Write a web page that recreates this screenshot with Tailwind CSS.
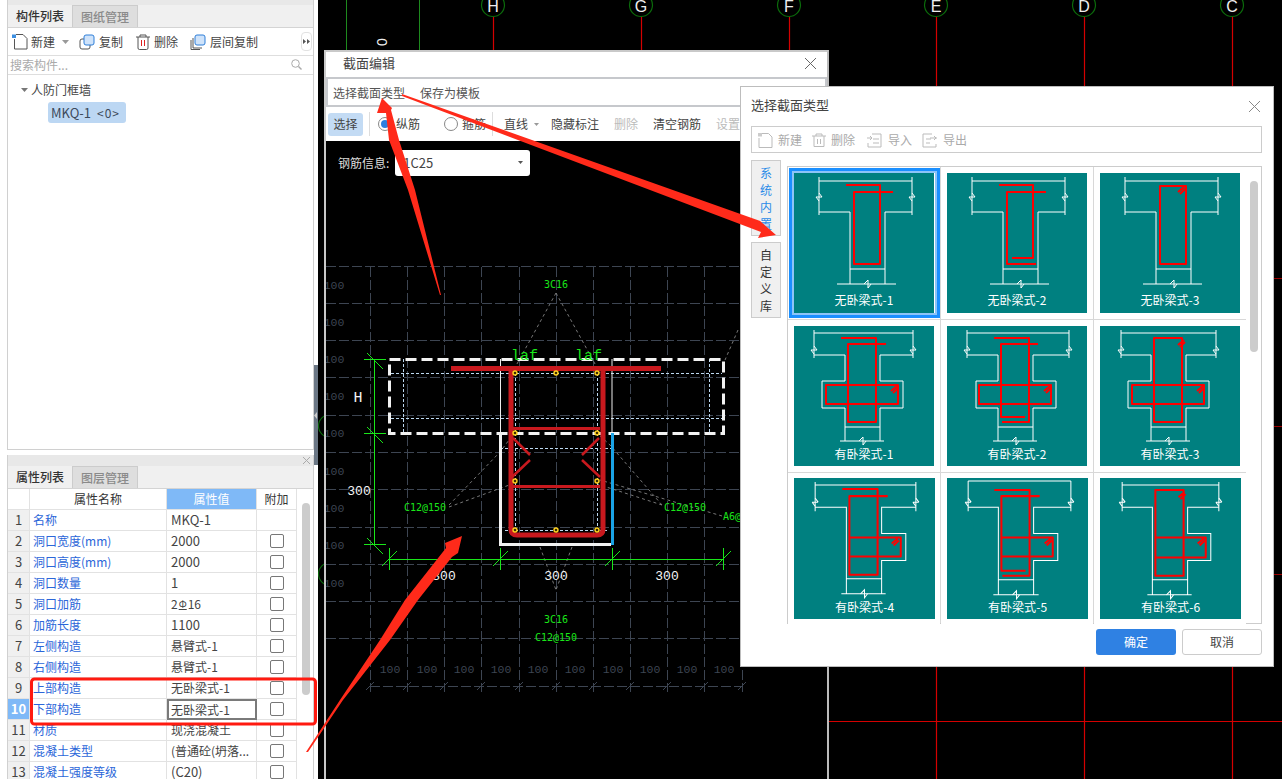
<!DOCTYPE html>
<html lang="zh">
<head>
    <meta charset="UTF-8">
    <title>截面编辑</title>
    <script src="https://cdn.jsdelivr.net/npm/@tailwindcss/browser@4"></script>
</head>
<body class="bg-white">
<div class="relative flex w-[1282px] h-[779px] overflow-hidden font-['Noto_Sans_CJK_SC','Noto_Sans',sans-serif] text-[12px] text-[#444]">

    <!-- left column -->
    <aside class="relative w-[318px] h-full shrink-0 bg-white pl-[7px] pr-[4px] flex flex-col">
        <section class="h-[450px] border-x border-b border-[#d0d0d0] flex flex-col shrink-0">
            <div class="h-[5px] bg-[#e8e8e8]"></div>
            <div class="h-[23px] bg-[#f0f0f0] border-b border-[#d4d4d4] flex">
                <div class="w-[65px] flex items-center justify-center font-medium text-[#333] border-r border-[#ccc]">构件列表</div>
                <div class="w-[65px] flex items-center justify-center font-medium text-[#8a8a8a] bg-[#dedede] border-r border-t border-[#ccc]">图纸管理</div>
            </div>
            <div class="h-[28px] relative flex items-center border-b border-[#dedede] pl-[4px]">
                <svg class="w-4 h-4 mr-[3px]" viewBox="0 0 16 16" fill="none"><path d="M2.500 5v10h12.500V4.500L11 .5H4" stroke="#555"/><path d="M0 .5h4v3.500H0z" fill="#3d8fe0"/></svg>
                <span>新建</span>
                <svg class="w-[7px] h-1 ml-[7px]" viewBox="0 0 7 4"><path d="M0 0h7L3.500 4z" fill="#999"/></svg>
                <svg class="w-4 h-4 ml-[10px] mr-[4px]" viewBox="0 0 16 16" fill="none"><rect x="1" y="5" width="10" height="10" rx="2" stroke="#555"/><rect x="5" y="1" width="10" height="10" rx="2" fill="#cfe3fa" stroke="#2f7fd8"/></svg>
                <span>复制</span>
                <svg class="w-[14px] h-4 ml-[13px] mr-[4px]" viewBox="0 0 14 16" fill="none"><path d="M0 3h14M4 3V1h6v2M2 3v11a1.500 1.500 0 0 0 1.500 1.500h7A1.500 1.500 0 0 0 12 14V3" stroke="#555"/><path d="M5.500 6v6M8.500 6v6" stroke="#d22"/></svg>
                <span>删除</span>
                <svg class="w-4 h-4 ml-[12px] mr-[4px]" viewBox="0 0 16 16" fill="none"><path d="M3 4v10h9M1 6v9.500h9" stroke="#555"/><rect x="5" y="1" width="10" height="10" rx="2" fill="#cfe3fa" stroke="#2f7fd8"/></svg>
                <span>层间复制</span>
                <div class="absolute right-[1px] top-[4px] w-[11px] h-[19px] border border-[#e2e2e2] rounded-sm flex items-center justify-center">
                    <svg class="w-[7px] h-[5px]" viewBox="0 0 7 5"><path d="M0 0l3 2.500L0 5zM4 0l3 2.500L4 5z" fill="#555"/></svg>
                </div>
            </div>
            <div class="h-[19px] relative flex items-center border-b border-[#dedede] pl-[2px] text-[#aaa]">
                搜索构件...
                <svg class="absolute right-[11px] top-[3px] w-[11px] h-[11px]" viewBox="0 0 11 11" fill="none"><circle cx="4.500" cy="4.500" r="3.800" stroke="#aaa"/><path d="M7.500 7.500l3 3" stroke="#aaa" stroke-width="1.400"/></svg>
            </div>
            <div class="flex-1 pt-[6px]">
                <div class="flex items-center h-[18px] pl-[13px]">
                    <svg class="w-[7px] h-1 mr-[3px]" viewBox="0 0 7 4"><path d="M0 0h7L3.500 4z" fill="#777"/></svg>
                    <span>人防门框墙</span>
                </div>
                <div class="ml-[40px] mt-[3px] w-[78px] h-[21px] rounded-[3px] bg-[#bcd7f3] flex items-center pl-[3px] text-[13px] text-[#3c4a5a]">MKQ-1 <span class="ml-[6px] text-[12px] tracking-[1px]">&lt;0&gt;</span></div>
            </div>
        </section>

        <section class="mt-[5px] flex-1 min-h-0 border-x border-[#d0d0d0] flex flex-col relative">
            <div class="h-[11px] bg-[#e8e8e8] relative shrink-0">
                <svg class="absolute right-[3px] top-[2px] w-[7px] h-[7px]" viewBox="0 0 7 7"><path d="M0 0l7 7M7 0L0 7" stroke="#aaa"/></svg>
            </div>
            <div class="h-[23px] bg-[#f0f0f0] border-b border-[#d4d4d4] flex shrink-0">
                <div class="w-[65px] flex items-center justify-center font-medium text-[#333] border-r border-[#ccc]">属性列表</div>
                <div class="w-[65px] flex items-center justify-center font-medium text-[#8a8a8a] bg-[#dedede] border-r border-t border-[#ccc]">图层管理</div>
            </div>
            <div id="props" class="grid grid-cols-[22px_137px_90px_40px] auto-rows-[21px] w-[289px] relative"></div>
            <div class="absolute left-[294px] top-[48px] w-[8px] h-[192px] rounded bg-[#cccccc]"></div>
        </section>
    </aside>

    <!-- splitter handle -->
    <div class="absolute left-[314px] top-[365px] w-[4px] h-[100px] bg-[#6b7785] flex items-center">
        <svg class="w-[3px] h-[7px]" viewBox="0 0 3 7"><path d="M3 0v7L0 3.500z" fill="#ccc"/></svg>
    </div>

    <!-- CAD canvas -->
    <main class="relative flex-1 h-full bg-black">
        <svg class="absolute inset-0" width="964" height="779" viewBox="318 0 964 779" fill="none">
            <g stroke="#d40000" stroke-width="1.200"><path d="M493.500 17V779M641.500 17V779M789.500 17V779M936.500 17V779M1084.500 17V779M1232.500 17V779M829 721.500H1282"/></g>
            <g stroke="#9c0000" stroke-width="1.200"><path d="M1274 278.500h8M1274 426.500h8M1274 574.500h8"/></g>
            <g stroke="#1e8a1e"><path d="M346.500 0V50M419.500 0V50"/></g>
            <g stroke="#0b6b0b" stroke-width="1.200">
                <circle cx="493" cy="5" r="11.500"/><circle cx="641" cy="5" r="11.500"/><circle cx="789" cy="5" r="11.500"/><circle cx="936" cy="5" r="11.500"/><circle cx="1084" cy="5" r="11.500"/><circle cx="1232" cy="5" r="11.500"/>
                <circle cx="330" cy="426" r="11.500"/><circle cx="330" cy="574" r="11.500"/>
            </g>
            <g fill="#eee" font-family="'Liberation Sans',sans-serif" font-size="16" text-anchor="middle">
                <text x="493" y="12">H</text><text x="641" y="12">G</text><text x="789" y="12">F</text><text x="936" y="12">E</text><text x="1084" y="12">D</text><text x="1232" y="12">C</text>
            </g>
            <text transform="translate(387 42) rotate(-90)" fill="#eee" font-family="'Liberation Sans',sans-serif" font-size="14" text-anchor="middle">0</text>
        </svg>

        <!-- section editor window -->
        <div class="absolute left-[6px] top-[50px] w-[505px] h-[729px] bg-black border-x-2 border-t-2 border-[#c9c9c9] border-r-[#bbb] flex flex-col">
            <div class="h-[25px] bg-white relative shrink-0 flex items-center pl-[17px] pb-[3px] text-[13px] text-[#444]">
                截面编辑
                <svg class="absolute right-[11px] top-[6px] w-[11px] h-[11px]" viewBox="0 0 11 11"><path d="M0 0l11 11M11 0L0 11" stroke="#666"/></svg>
            </div>
            <div class="h-[30px] bg-white border-y-2 border-x-2 border-[#c6c8cc] shrink-0 flex items-center gap-[15px] pl-[5px] pt-[1px] text-[#555]">
                <span>选择截面类型</span><span>保存为模板</span>
            </div>
            <div class="h-[34px] bg-white shrink-0 flex items-center pl-[2px] text-[#444]">
                <div class="w-[35px] h-[23px] rounded-[3px] bg-[#c3dbf4] flex items-center justify-center">选择</div>
                <div class="w-px h-[24px] bg-[#ddd] ml-[6px]"></div>
                <span class="ml-[8px] w-[14px] h-[14px] rounded-full border border-[#888] flex items-center justify-center"><span class="w-2 h-2 rounded-full bg-[#2d7fe0]"></span></span>
                <span class="ml-[4px]">纵筋</span>
                <span class="ml-[24px] w-[14px] h-[14px] rounded-full border border-[#888]"></span>
                <span class="ml-[4px]">箍筋</span>
                <div class="w-px h-[24px] bg-[#ddd] ml-[6px]"></div>
                <span class="ml-[11px]">直线</span>
                <svg class="w-[5px] h-[3px] ml-[6px]" viewBox="0 0 5 3"><path d="M0 0h5L2.500 3z" fill="#999"/></svg>
                <span class="ml-[12px]">隐藏标注</span>
                <span class="ml-[15px] text-[#bbb]">删除</span>
                <span class="ml-[15px]">清空钢筋</span>
                <span class="ml-[15px] text-[#bbb]">设置</span>
            </div>
            <div class="relative flex-1 bg-black">
                <div class="absolute left-[12px] top-[9px] h-[26px] flex items-center gap-[6px] text-[#ddd]">
                    钢筋信息:
                    <div class="relative w-[135px] h-[26px] rounded-[3px] bg-white flex items-center pl-[8px] text-[#444] text-[13px]">
                        1C25
                        <svg class="absolute right-[7px] top-[11px] w-[5px] h-[3px]" viewBox="0 0 5 3"><path d="M0 0h5L2.500 3z" fill="#555"/></svg>
                    </div>
                </div>
            </div>
        </div>

        <!-- drawing inside the editor -->
        <svg id="drawing" class="absolute left-[8px] top-[141px]" width="502" height="638" viewBox="326 141 502 638" fill="none">
            <g id="grid" stroke="#3d4552" stroke-dasharray="10 3"></g>
            <g id="gridText" fill="#3d4552" font-family="'Liberation Mono',monospace" font-size="11.500" text-anchor="middle"></g>

            <g stroke="#777" stroke-dasharray="3 3">
                <path d="M556 293L512 373M556 293L600 373M540 547L556 590M572 547L556 590M449 505L500 452L512 436M449 507L512 484M662 505L610 445L597 433M662 505L597 484M722 516L600 480M738 330L725 360"/>
            </g>

            <path d="M391 373.500H722M391 418.500H722M403.500 359V433M709.500 359V433M500 448.500H612M515.500 373V530M597.500 373V530M505 530.500H607" stroke="#bcd8f0" stroke-dasharray="3 2"/>
            <path d="M500.500 359V433M612 359V433" stroke="#eee"/>
            <rect x="389.500" y="359.500" width="334" height="74" stroke="#f2f2f2" stroke-width="3" stroke-dasharray="11 5"/>
            <path d="M500.500 433V544.500H611" stroke="#f2f2f2" stroke-width="3"/>
            <path d="M612.500 433V545" stroke="#1aa3e6" stroke-width="3"/>

            <g stroke="#c8191e">
                <path d="M451 368.500H661" stroke-width="5"/>
                <path d="M511 368V529Q511 535 517 535H597Q603 535 603 529V368" stroke-width="5"/>
                <path d="M513 428.500H600M513 486.500H600" stroke-width="3"/>
                <path d="M513 438L530 455M530 460L512 477M599 438L582 455M582 460L600 477" stroke-width="2.500"/>
            </g>
            <g fill="#3a2c00" stroke="#ffd21f" stroke-width="1.400">
                <circle cx="515" cy="373" r="2"/><circle cx="556" cy="373" r="2"/><circle cx="597" cy="373" r="2"/>
                <circle cx="515" cy="433" r="2"/><circle cx="597" cy="433" r="2"/>
                <circle cx="515" cy="481" r="2"/><circle cx="597" cy="481" r="2"/>
                <circle cx="515" cy="530" r="2"/><circle cx="556" cy="530" r="2"/><circle cx="597" cy="530" r="2"/>
            </g>

            <g stroke="#19e619">
                <path d="M374.500 359V544M364 359.500H386M364 433.500H386M364 544.500H386M367 353L383 369M367 427L383 443M367 538L383 554"/>
                <path d="M389 559.500H723M389.500 548V570M500.500 548V570M612.500 548V570M723.500 548V570M382 566L397 551M493 566L508 551M605 566L620 551M716 566L731 551"/>
            </g>
            <g fill="#19e619" font-family="'DejaVu Sans Mono',monospace" font-size="10">
                <text x="556" y="288" text-anchor="middle">3C16</text>
                <text x="556" y="623" text-anchor="middle">3C16</text>
                <text x="425" y="511" text-anchor="middle">C12@150</text>
                <text x="685" y="511" text-anchor="middle">C12@150</text>
                <text x="556" y="641" text-anchor="middle">C12@150</text>
                <text x="723" y="520">A6@</text>
            </g>
            <g fill="#19e619" font-family="'Liberation Mono',monospace" font-size="15" text-anchor="middle">
                <text x="524.500" y="360">laf</text><text x="588.500" y="360">laf</text>
            </g>
            <g fill="#f4f4f4" font-family="'Liberation Mono',monospace" font-size="13" text-anchor="middle">
                <text x="359" y="495">300</text><text x="444" y="580">300</text><text x="556" y="580">300</text><text x="667" y="580">300</text>
                <text x="358" y="402" font-size="15">H</text>
            </g>
        </svg>

        <!-- choose section type window -->
        <div class="absolute left-[422px] top-[86px] w-[534px] h-[581px] bg-white border border-[#bdbdbd] text-[#444]">
            <div class="h-[39px] relative flex items-center pl-[10px] pb-[3px] text-[13px]">
                选择截面类型
                <svg class="absolute right-[13px] top-[14px] w-[11px] h-[11px]" viewBox="0 0 11 11"><path d="M0 0l11 11M11 0L0 11" stroke="#888"/></svg>
            </div>
            <div class="ml-[10px] w-[511px] h-[27px] border border-[#ccc] flex items-center pl-[6px] pt-[1px] text-[#aaa]">
                <svg class="w-[15px] h-[15px] mr-[5px]" viewBox="0 0 15 15" fill="none"><path d="M1 5v9.500h13V4L10.500.5H4" stroke="#bbb"/><path d="M0 0h4v3.500H0z" fill="#ccc"/></svg><span>新建</span>
                <svg class="w-[14px] h-[15px] ml-[10px] mr-[5px]" viewBox="0 0 14 15" fill="none"><path d="M0 3h14M4 3V1h6v2M2 3v10.500h10V3M5.500 6v5M8.500 6v5" stroke="#bbb"/></svg><span>删除</span>
                <svg class="w-[15px] h-[15px] ml-[12px] mr-[6px]" viewBox="0 0 15 15" fill="none"><path d="M5 1h9v13H1v-4M6 6h6M6 10h6M0 5h5M3 3l2 2-2 2" stroke="#bbb"/></svg><span>导入</span>
                <svg class="w-[15px] h-[15px] ml-[10px] mr-[6px]" viewBox="0 0 15 15" fill="none"><path d="M10 1H1v13h13v-3M4 6h5M4 10h4M8 5h7M12 3l2 2-2 2" stroke="#bbb"/></svg><span>导出</span>
            </div>
            <div class="flex mt-[7px] ml-[10px]">
                <div class="w-[30px] mr-[6px] flex flex-col gap-[6px]">
                    <div class="h-[76px] overflow-hidden bg-[#f0f0f0] border border-[#ccc] text-[#2a8be8] text-center leading-[17px] pt-[3px]">系<br>统<br>内<br>置</div>
                    <div class="h-[76px] bg-[#f0f0f0] border border-[#ccc] text-[#333] text-center leading-[17px] pt-[3px]">自<br>定<br>义<br>库</div>
                </div>
                <div class="relative mt-[6px] w-[475px] h-[458px] border border-[#ccc] flex">
                    <div id="thumbs" class="grid grid-cols-[152px_152px_152px] gap-x-px grid-rows-[152px_152px_151px] gap-y-px bg-[#d8d8d8] w-[458px] border-r border-[#d8d8d8]"></div>
                    <div class="absolute left-[462px] top-[14px] w-[8px] h-[171px] rounded bg-[#cccccc]"></div>
                </div>
            </div>
            <div class="flex justify-end gap-[6px] mt-[5px] mr-[11px]">
                <div class="w-[80px] h-[26px] rounded-[3px] bg-[#2f81e3] text-white flex items-center justify-center">确定</div>
                <div class="w-[80px] h-[26px] rounded-[3px] border border-[#ccc] bg-white text-[#444] flex items-center justify-center">取消</div>
            </div>
        </div>
    </main>

    <!-- annotations drawn on top of the screenshot -->
    <svg class="absolute inset-0 pointer-events-none" width="1282" height="779" viewBox="0 0 1282 779" fill="none">
        <rect x="31.500" y="679" width="284" height="45" rx="3" stroke="#ff1a10" stroke-width="3"/>
        <g fill="#ff2a1a">
            <path d="M382 98L392 108L391 110L399 140L415 190L441 295L440 295L408 190L389 140L386 113L377 113Z"/>
            <path d="M402 94L763 222L760 221L776 235L758 238L761 232L402 96Z"/>
            <path d="M462 536L445 543L446 548L405 600L380 640L340 700L306 752L308 752L343 700L390 640L418 600L452 557L458 553Z"/>
        </g>
    </svg>
</div>

<script>
    // property table
    const rows = [
        ['名称', 'MKQ-1', false], ['洞口宽度(mm)', '2000', true], ['洞口高度(mm)', '2000', true],
        ['洞口数量', '1', true], ['洞口加筋', '2<span class="text-[10px] underline relative -top-px mx-px">Φ</span>16', true], ['加筋长度', '1100', true],
        ['左侧构造', '悬臂式-1', true], ['右侧构造', '悬臂式-1', true], ['上部构造', '无卧梁式-1', true],
        ['下部构造', '无卧梁式-1', true], ['材质', '现浇混凝土', true], ['混凝土类型', '(普通砼(坍落...', true],
        ['混凝土强度等级', '(C20)', true]
    ];
    const cell = 'border-r border-b border-[#e2e2e2] flex items-center';
    document.getElementById('props').innerHTML =
        `<div class="${cell} bg-white"></div>
         <div class="${cell} justify-center text-[#333]">属性名称</div>
         <div class="${cell} justify-center bg-[#7fb9f7] text-white">属性值</div>
         <div class="${cell} justify-center text-[#333]">附加</div>` +
        rows.map((r, i) => `
            <div class="${cell} justify-center text-[13px] ${i === 9 ? 'bg-[#7fb9f7] text-white font-bold' : 'bg-[#f0f0f0] text-[#444]'}">${i + 1}</div>
            <div class="${cell} pl-[3px] text-[#2b66d9]">${r[0]}</div>
            <div class="${i === 9 ? 'border-2 border-[#7a7a7a] pl-[2px] flex items-center' : cell + ' pl-[4px]'} ${/^[A-Z0-9(]+[-0-9)]*$/.test(r[1]) ? 'text-[13px]' : ''} text-[#444]">${r[1]}</div>
            <div class="${cell} justify-center">${r[2] ? '<span class="w-[14px] h-[14px] rounded-[2px] border border-[#777]"></span>' : ''}</div>
        `).join('');

    // drawing grid
    const xs = [370, 407, 444, 481, 519, 556, 593, 630, 667, 704, 742];
    const ys = [266, 303, 340, 377, 415, 452, 489, 527, 564, 601, 638];
    let grid = '', labels = '';
    ys.forEach(y => grid += `<path d="M326 ${y + .5}H741"/>`);
    xs.forEach(x => grid += `<path d="M${x + .5} 267V692"/>`);
    grid += '<path d="M370 686.500H742"/>';
    xs.forEach(x => grid += `<path stroke-dasharray="none" d="M${x - 4} 690L${x + 4} 682"/>`);
    [285, 322, 359, 396, 433, 471, 508, 545, 583].forEach(y => labels += `<text x="334" y="${y + 4}">100</text>`);
    [390, 427, 464, 501, 538, 575, 613, 650, 687, 724].forEach(x => labels += `<text x="${x}" y="673">100</text>`);
    document.getElementById('grid').innerHTML = grid;
    document.getElementById('gridText').innerHTML = labels;

    // section type thumbnails: white outline, then red rebar; l/r = slab edges, cx/by = bottom break mark
    const hookA = 'M78 19L84 14M80 21L85 16';
    const hookB = 'M97 65L103 60M99 67L104 62';
    const types = [
        { name: '无卧梁式-1', l: 25, r: 118, cx: 73, by: 111, white: 'M25 4V42M118 4V42M25 8H118M25 39H56V111M118 39H91V111M56 96H91M43 111H102', red: 'M52 12H86V91H60V19H99' },
        { name: '无卧梁式-2', l: 25, r: 118, cx: 73, by: 111, white: 'M25 4V42M118 4V42M25 8H118M25 39H56V111M118 39H91V111M56 96H91M43 111H102', red: 'M52 12H86V85H65M99 19H60V91H89' },
        { name: '无卧梁式-3', l: 25, r: 118, cx: 73, by: 111, white: 'M25 4V42M118 4V42M25 8H118M25 39H56V111M118 39H91V111M56 96H91M43 111H102', red: 'M60 13H86V91H60Z' + hookA },
        { name: '有卧梁式-1', l: 20, r: 119, cx: 68, by: 115, white: 'M20 4V32M119 4V32M20 7H119M20 29H51V55H28V82H51V115M119 29H86V55H109V82H86V115M51 101H86M46 115H90', red: 'M47 12H82V96H54V18H92M32 59H104V78H32Z' + hookB },
        { name: '有卧梁式-2', l: 20, r: 122, cx: 68, by: 115, white: 'M20 4V32M122 4V32M20 7H122M20 29H51V55H29V82H51V115M122 29H86V55H109V82H86V115M51 101H86M46 115H90', red: 'M47 12H82V96H55M91 18H54V91H78M32 59H104V78H32Z' + hookB },
        { name: '有卧梁式-3', l: 21, r: 116, cx: 68, by: 115, white: 'M21 4V32M116 4V32M21 7H116M21 29H51V55H28V82H51V115M116 29H86V55H109V82H86V115M51 101H86M46 115H90', red: 'M54 12H82V96H54ZM32 59H104V78H32Z' + hookA + hookB },
        { name: '有卧梁式-4', l: 21, r: 121, cx: 69, by: 115, white: 'M21 4V33M121 4V33M21 7H121M21 29H52V115M121 29H87V55H111V82H87V115M52 100H87M47 115H91', red: 'M48 11H83V96H55V18H93M55 59H106V78H55' + hookB },
        { name: '有卧梁式-5', l: 21, r: 123, cx: 68, by: 116, white: 'M21 3V33M123 3V33M21 3H123M21 29H51V116M123 29H86V55H110V82H86V116M51 101H86M46 116H91', red: 'M47 12H82V97H55M92 18H54V92H78M54 59H105V78H54' + hookB },
        { name: '有卧梁式-6', l: 22, r: 118, cx: 69, by: 116, white: 'M22 4V33M118 4V33M22 7H118M22 29H52V116M118 29H87V55H110V82H87V116M52 101H87M47 116H91', red: 'M55 12H83V97H55ZM55 59H105V79H55' + hookA + hookB }
    ];
    const slabMark = x => `M${x - 3} 24H${x + 3}M${x} 20L${x + 3} 24M${x - 3} 24L${x} 28`;
    document.getElementById('thumbs').innerHTML = types.map((t, i) => `
        <div class="relative bg-white flex items-center justify-center">
            <svg class="${i < 6 ? 'w-[140px] h-[140px]' : 'w-[141px] h-[141px]'} bg-[#008080]" viewBox="0 0 140 140" fill="none">
                <path d="${t.white}" stroke="#fff"/>
                <path d="${slabMark(t.l)}${slabMark(t.r)}M${t.cx - 3} ${t.by}L${t.cx + 1} ${t.by - 4}V${t.by + 4}L${t.cx + 4} ${t.by}" stroke="#fff"/>
                <path d="${t.red}" stroke="#ff0000" stroke-width="2" stroke-linejoin="round"/>
                <text x="70" y="${i < 3 ? 132 : 133}" fill="#fff" font-size="12" text-anchor="middle" font-family="'Noto Sans CJK SC',sans-serif">${t.name}</text>
            </svg>
            ${i === 0 ? '<div class="absolute left-[1px] top-[1px] w-[151px] h-[150px] border-[3px] border-[#1a8fff]"><div class="w-full h-full border-2 border-[#8cc4f7]"></div></div>' : ''}
        </div>`).join('');
</script>
</body>
</html>
